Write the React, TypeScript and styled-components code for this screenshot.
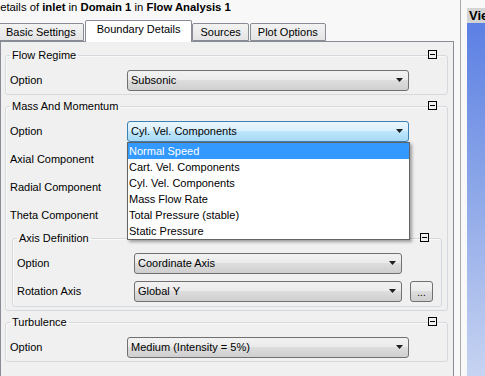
import React from 'react';
import styled, { createGlobalStyle } from 'styled-components';

const GlobalStyle = createGlobalStyle`
  html, body {
    margin: 0;
    padding: 0;
  }
  body {
    background: #f8f8f8;
    font-family: "Liberation Sans", Arial, sans-serif;
    font-size: 11px;
    color: #000;
  }
`;

const Window = styled.div`
  display: flex;
  width: 485px;
  height: 376px;
  overflow: hidden;
`;

const DetailsPane = styled.div`
  width: 461px;
  flex-shrink: 0;
  box-sizing: border-box;
  border-right: 1px solid #a9a9a9;
  display: flex;
  flex-direction: column;
  overflow: hidden;
`;

const Title = styled.div`
  height: 18px;
  line-height: 14px;
  margin-left: -8px;
  white-space: nowrap;
  font-size: 11.3px;
`;

const TabStrip = styled.div`
  height: 23px;
  display: flex;
  align-items: flex-end;
  margin-left: -2px;
  position: relative;
  z-index: 1;
`;

const Tab = styled.div<{ $active?: boolean }>`
  box-sizing: border-box;
  height: ${(p) => (p.$active ? '22px' : '18px')};
  padding: 0 ${(p) => (p.$active ? '11px' : '7px')};
  line-height: ${(p) => (p.$active ? '17px' : '16px')};
  margin-bottom: ${(p) => (p.$active ? '-1px' : '0')};
  margin-right: ${(p) => (p.$active ? '0' : '1px')};
  border: 1px solid #898c95;
  border-bottom: ${(p) => (p.$active ? 'none' : '1px solid #898c95')};
  border-radius: 2px 2px 0 0;
  background: ${(p) => (p.$active ? '#ffffff' : 'linear-gradient(#f3f3f3, #e4e4e4)')};
  white-space: nowrap;
`;

const TabPanel = styled.div`
  width: 454px;
  flex: 1;
  box-sizing: border-box;
  border: 1px solid #898c95;
  border-bottom: none;
  background: #f0f0f0;
  padding: 6px 5px 0 4px;
`;

const Group = styled.fieldset<{ $nested?: boolean }>`
  position: relative;
  min-width: 0;
  margin: ${(p) => (p.$nested ? '2px 0 0 2px' : '0 0 4px 0')};
  padding: ${(p) => (p.$nested ? '4px 0 1px 4px' : '4px 5px 0 4px')};
  border: 1px solid #d5d9de;
  border-radius: 3px;
  box-shadow: inset 1px 1px 0 #fafafa;
`;

const GroupPad = styled.div`
  height: 3px;
`;

const Legend = styled.legend`
  padding: 0 2px;
  line-height: 14px;
`;

const CollapseIcon = styled.span<{ $right: number }>`
  position: absolute;
  top: -12px;
  right: ${(p) => p.$right}px;
  width: 9px;
  height: 9px;
  box-sizing: border-box;
  border: 1px solid #000;
  background: #f0f0f0;
  &::after {
    content: '';
    position: absolute;
    left: 1px;
    right: 1px;
    top: 3px;
    height: 1px;
    background: #000;
  }
`;

const Row = styled.div`
  display: flex;
  align-items: center;
  height: 28px;
`;

const Label = styled.span`
  width: 117px;
  flex-shrink: 0;
  white-space: nowrap;
`;

const ComboBox = styled.div<{ $width: number; $open?: boolean }>`
  position: relative;
  box-sizing: border-box;
  width: ${(p) => p.$width}px;
  height: 21px;
  display: flex;
  align-items: center;
  justify-content: space-between;
  padding: 0 5px 0 3px;
  border: 1px solid ${(p) => (p.$open ? '#3c7fb1' : '#707070')};
  border-radius: 3px;
  background: ${(p) =>
    p.$open
      ? 'linear-gradient(#eaf6fd 0%, #d9f0fc 45%, #bee6fd 50%, #a7d9f5 100%)'
      : 'linear-gradient(#f2f2f2 0%, #ebebeb 45%, #dddddd 50%, #cfcfcf 100%)'};
  white-space: nowrap;
`;

const Arrow = () => (
  <svg width="7" height="4" viewBox="0 0 7 4">
    <path d="M0 0h7L3.5 4z" fill="#1e1e1e" />
  </svg>
);

const DropList = styled.div`
  position: absolute;
  z-index: 10;
  top: 20px;
  left: -1px;
  width: 283px;
  box-sizing: border-box;
  border: 1px solid #646464;
  background: #fff;
  box-shadow: 2px 2px 3px rgba(0, 0, 0, 0.35);
`;

const DropItem = styled.div<{ $selected?: boolean }>`
  height: 16px;
  line-height: 16px;
  padding-left: 1px;
  background: ${(p) => (p.$selected ? '#3399ff' : 'transparent')};
  color: ${(p) => (p.$selected ? '#fff' : '#000')};
  white-space: nowrap;
`;

const EllipsisButton = styled.div`
  box-sizing: border-box;
  width: 23px;
  height: 21px;
  margin-left: 8px;
  border: 1px solid #707070;
  border-radius: 3px;
  background: linear-gradient(#f2f2f2 0%, #ebebeb 45%, #dddddd 50%, #cfcfcf 100%);
  display: flex;
  align-items: flex-end;
  justify-content: center;
  padding-bottom: 3px;
  font-size: 10px;
  line-height: 10px;
`;

const ViewerPane = styled.div`
  flex: 1;
  margin-left: 6px;
  display: flex;
  flex-direction: column;
  padding-top: 8px;
`;

const ViewerHeader = styled.div`
  height: 15px;
  line-height: 15px;
  background: #d4d4d4;
  font-weight: bold;
  font-size: 13px;
  padding-left: 2px;
  white-space: nowrap;
  overflow: hidden;
`;

const ViewerBody = styled.div`
  flex: 1;
  background: linear-gradient(#5c80e4 0%, #8aa5e8 45%, #c7d3f1 100%);
`;

const velocityOptions = [
  'Normal Speed',
  'Cart. Vel. Components',
  'Cyl. Vel. Components',
  'Mass Flow Rate',
  'Total Pressure (stable)',
  'Static Pressure',
];

const Combo = ({ value, width = 282, open }: { value: string; width?: number; open?: boolean }) => (
  <ComboBox $width={width} $open={open}>
    <span>{value}</span>
    <Arrow />
    {open && (
      <DropList>
        {velocityOptions.map((o, i) => (
          <DropItem key={o} $selected={i === 0}>
            {o}
          </DropItem>
        ))}
      </DropList>
    )}
  </ComboBox>
);

const App = () => {
  return (
    <>
      <GlobalStyle />
      <Window>
        <DetailsPane>
          <Title>
            Details of <b>inlet</b> in <b>Domain 1</b> in <b>Flow Analysis 1</b>
          </Title>
          <TabStrip>
            <Tab>Basic Settings</Tab>
            <Tab $active>Boundary Details</Tab>
            <Tab>Sources</Tab>
            <Tab>Plot Options</Tab>
          </TabStrip>
          <TabPanel>
            <Group>
              <Legend>Flow Regime</Legend>
              <CollapseIcon $right={10} />
              <Row>
                <Label>Option</Label>
                <Combo value="Subsonic" />
              </Row>
            </Group>

            <Group>
              <Legend>Mass And Momentum</Legend>
              <CollapseIcon $right={10} />
              <Row>
                <Label>Option</Label>
                <Combo value="Cyl. Vel. Components" open />
              </Row>
              <Row>
                <Label>Axial Component</Label>
              </Row>
              <Row>
                <Label>Radial Component</Label>
              </Row>
              <Row>
                <Label>Theta Component</Label>
              </Row>
              <Group $nested>
                <Legend>Axis Definition</Legend>
                <CollapseIcon $right={12} />
                <Row>
                  <Label>Option</Label>
                  <Combo value="Coordinate Axis" width={268} />
                </Row>
                <Row>
                  <Label>Rotation Axis</Label>
                  <Combo value="Global Y" width={268} />
                  <EllipsisButton>...</EllipsisButton>
                </Row>
              </Group>
              <GroupPad />
            </Group>

            <Group>
              <Legend>Turbulence</Legend>
              <CollapseIcon $right={10} />
              <Row>
                <Label>Option</Label>
                <Combo value="Medium (Intensity = 5%)" />
              </Row>
            </Group>
          </TabPanel>
        </DetailsPane>
        <ViewerPane>
          <ViewerHeader>Viewer</ViewerHeader>
          <ViewerBody />
        </ViewerPane>
      </Window>
    </>
  );
};

export default App;
